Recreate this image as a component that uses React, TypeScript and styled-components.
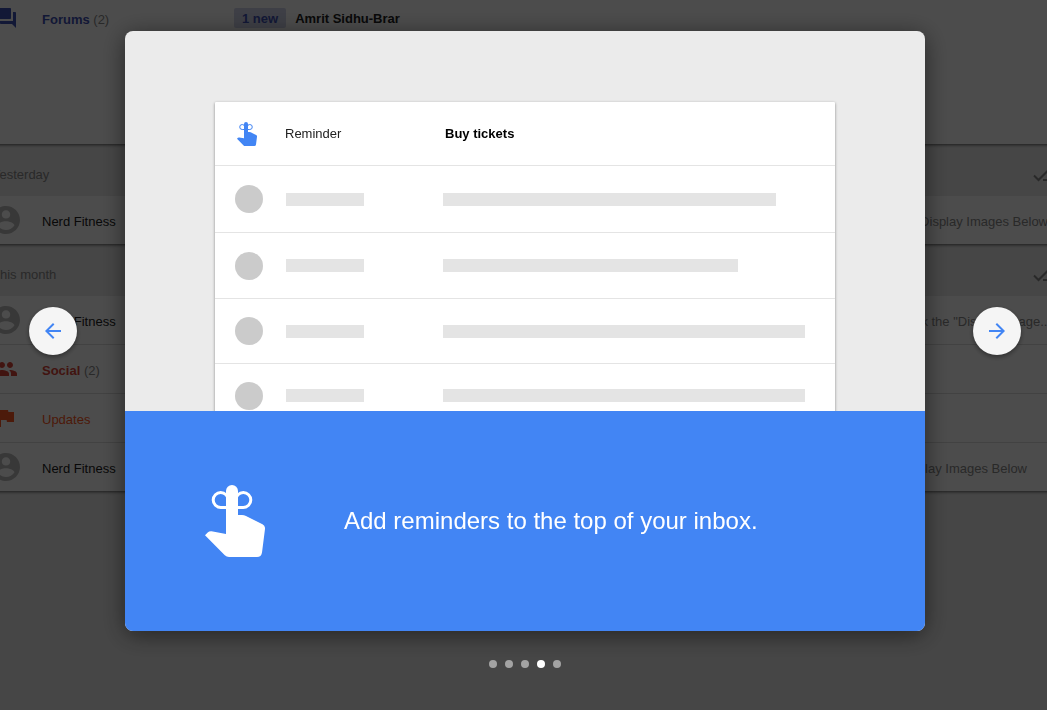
import React from "react";
import styled, { createGlobalStyle } from "styled-components";

const GlobalStyle = createGlobalStyle`
  * { box-sizing: border-box; }
  body {
    margin: 0;
    background: #ebebeb;
    font-family: "Liberation Sans", Arial, sans-serif;
    font-size: 13px;
    line-height: 16px;
    color: #212121;
    overflow: hidden;
  }
  h2, p, ul { margin: 0; padding: 0; }
`;

const Page = styled.div`
  min-height: 100vh;
  overflow: hidden;
`;

const Inbox = styled.main`
  margin: 0 -24px 0 -8px;
`;

const Card = styled.section<{ $tall?: boolean }>`
  background: #fff;
  min-height: ${(p) => (p.$tall ? 144 : 48)}px;
  box-shadow: 0 2px 3px -1px rgba(0, 0, 0, 0.6);
`;

const Row = styled.div<{ $first?: boolean }>`
  display: flex;
  align-items: center;
  height: ${(p) => (p.$first ? 36 : 48)}px;
  & + & {
    height: 49px;
    border-top: 1px solid #dcdcdc;
  }
`;

const IconSlot = styled.span<{ $color: string }>`
  display: flex;
  flex: none;
  justify-content: center;
  width: 28px;
  margin-right: 22px;
  color: ${(p) => p.$color};
`;

const Label = styled.span<{ $color?: string; $bold?: boolean }>`
  flex: none;
  width: 192px;
  padding-top: 3px;
  color: ${(p) => p.$color || "#212121"};
  font-weight: ${(p) => (p.$bold ? 700 : 400)};
`;

const Count = styled.span`
  color: #8a8a8a;
  font-weight: 400;
`;

const Badge = styled.span`
  padding: 3px 8px 1px;
  margin-right: 9px;
  border-radius: 2px;
  background: #d0d4ea;
  color: #3f51b5;
  font-weight: 700;
`;

const Sender = styled.span`
  padding-top: 2px;
  font-weight: 700;
`;

const Snippet = styled.span<{ $inset: number }>`
  flex: 1;
  padding: 3px ${(p) => p.$inset}px 0 0;
  text-align: right;
  white-space: nowrap;
  color: #8a8a8a;
`;

const GroupHeader = styled.header`
  display: flex;
  align-items: center;
  justify-content: space-between;
  height: 52px;
  padding: 10px 14px 0 0;
  color: #8a8a8a;
`;

const GroupTitle = styled.h2`
  font-size: 13px;
  font-weight: 400;
`;

const Scrim = styled.div`
  position: fixed;
  inset: 0;
  display: flex;
  flex-direction: column;
  align-items: center;
  padding: 31px 26px 0 29px;
  background: rgba(0, 0, 0, 0.7);
`;

const Carousel = styled.div`
  display: flex;
  align-items: center;
  gap: 48px;
  width: 100%;
  max-width: 992px;
`;

const ArrowButton = styled.button`
  display: flex;
  flex: none;
  align-items: center;
  justify-content: center;
  width: 48px;
  height: 48px;
  padding: 0;
  border: 0;
  border-radius: 50%;
  background: #f5f5f5;
  color: #4285f4;
  box-shadow: 0 2px 5px rgba(0, 0, 0, 0.4);
  cursor: pointer;
`;

const Dialog = styled.section`
  flex: 1;
  min-width: 0;
  border-radius: 8px;
  overflow: hidden;
  background: #ebebeb;
  box-shadow: 0 4px 24px rgba(0, 0, 0, 0.5);
`;

const Preview = styled.div`
  height: 380px;
  padding: 71px 90px 0;
  overflow: hidden;
`;

const PreviewList = styled.div`
  border-radius: 1px 1px 0 0;
  background: #fff;
  box-shadow: 0 1px 3px rgba(0, 0, 0, 0.45);
`;

const ReminderRow = styled.div`
  display: grid;
  grid-template-columns: 50px 160px 1fr;
  align-items: center;
  height: 64px;
  padding: 0 20px;
  border-bottom: 1px solid #e4e4e4;
  color: #212121;
  svg { margin-left: 2px; }
`;

const ReminderTitle = styled.strong`
  color: #000;
`;

const PlaceholderRow = styled.div<{ $height: number }>`
  display: grid;
  grid-template-columns: 51px 157px 1fr;
  align-items: center;
  height: ${(p) => p.$height}px;
  padding: 0 20px;
  border-bottom: 1px solid #e4e4e4;
`;

const Avatar = styled.span`
  width: 28px;
  height: 28px;
  border-radius: 50%;
  background: #cbcbcb;
`;

const Bar = styled.span<{ $width: number }>`
  width: ${(p) => p.$width}px;
  max-width: 100%;
  height: 13px;
  background: #e4e4e4;
`;

const Caption = styled.div`
  display: flex;
  align-items: center;
  gap: 79px;
  height: 220px;
  padding: 0 80px;
  background: #4285f4;
  color: #fff;
`;

const CaptionText = styled.p`
  font-size: 24px;
  line-height: 32px;
`;

const Dots = styled.div`
  display: flex;
  gap: 8px;
  margin-top: 29px;
`;

const Dot = styled.button<{ $active: boolean }>`
  width: 8px;
  height: 8px;
  padding: 0;
  border: 0;
  border-radius: 50%;
  background: ${(p) => (p.$active ? "#fff" : "rgba(255, 255, 255, 0.5)")};
  cursor: pointer;
`;

const Glyph = ({ d }: { d: string }) => (
  <svg width="24" height="24" viewBox="0 0 24 24" fill="currentColor" aria-hidden="true">
    <path d={d} />
  </svg>
);

const paths = {
  forum:
    "M21 6h-2v9H6v2c0 .55.45 1 1 1h11l4 4V7c0-.55-.45-1-1-1zm-4 6V3c0-.55-.45-1-1-1H3c-.55 0-1 .45-1 1v14l4-4h10c.55 0 1-.45 1-1z",
  people:
    "M16 11c1.66 0 2.99-1.34 2.99-3S17.66 5 16 5s-3 1.34-3 3 1.34 3 3 3zm-8 0c1.66 0 2.99-1.34 2.99-3S9.66 5 8 5 5 6.34 5 8s1.34 3 3 3zm0 2c-2.33 0-7 1.17-7 3.5V19h14v-2.5c0-2.33-4.67-3.5-7-3.5zm8 0c-.29 0-.62.02-.97.05 1.16.84 1.97 1.97 1.97 3.45V19h6v-2.5c0-2.33-4.67-3.5-7-3.5z",
  flag: "M14.4 6L14 4H5v17h2v-7h5.6l.4 2h7V6z",
  back: "M20 11H7.83l5.59-5.59L12 4l-8 8 8 8 1.41-1.41L7.83 13H20v-2z",
  forward: "M12 4l-1.41 1.41L16.17 11H4v2h12.17l-5.58 5.59L12 20l8-8z",
};

const PersonIcon = () => (
  <svg width="28" height="28" viewBox="2 2 20 20" fill="currentColor" aria-hidden="true">
    <path d="M12 2C6.48 2 2 6.48 2 12s4.48 10 10 10 10-4.48 10-10S17.52 2 12 2zm0 3c1.66 0 3 1.34 3 3s-1.34 3-3 3-3-1.34-3-3 1.34-3 3-3zm0 14.2c-2.5 0-4.71-1.28-6-3.22.03-1.99 4-3.08 6-3.08 1.99 0 5.97 1.09 6 3.08-1.29 1.94-3.5 3.22-6 3.22z" />
  </svg>
);

const SweepIcon = () => (
  <svg width="24" height="24" viewBox="0 0 24 24" fill="none" stroke="currentColor" strokeWidth="2" aria-hidden="true">
    <path d="M1 12.500l4.500 4.500L16 6.500M10 17h8M14 13h8" />
  </svg>
);

const ReminderIcon = ({ width, height, color }: { width: number; height: number; color: string }) => (
  <svg width={width} height={height} viewBox="0 0 60 72" aria-hidden="true">
    <path
      fill={color}
      d="M21 6a6 6 0 0 1 12 0v24h4q2 0 4 1l16.500 8.300q2.800 1.500 2.500 4.700l-3 23.500q-.7 4.500-5 4.500H24q-2.400 0-4.200-1.800L0 50.200l2.700-2.700Q4.200 46 6.500 46.200L21 49z"
    />
    <path
      fill="none"
      stroke={color}
      strokeWidth="3"
      d="M27 22.500H15.700a7.500 7.500 0 1 1 7.500-7.500M27 22.500h11.300a7.500 7.500 0 1 0-7.500-7.500"
    />
  </svg>
);

const placeholders = [
  { height: 67, width: 333 },
  { height: 66, width: 295 },
  { height: 65, width: 362 },
  { height: 64, width: 362 },
];

const NerdFitness = ({ snippet, inset }: { snippet: string; inset: number }) => (
  <Row>
    <IconSlot $color="#bdbdbd">
      <PersonIcon />
    </IconSlot>
    <Label>Nerd Fitness</Label>
    <Snippet $inset={inset}>{snippet}</Snippet>
  </Row>
);

const Group = ({ title }: { title: string }) => (
  <GroupHeader>
    <GroupTitle>{title}</GroupTitle>
    <SweepIcon />
  </GroupHeader>
);

export default function App() {
  const [slide, setSlide] = React.useState(3);
  return (
    <>
      <GlobalStyle />
      <Page>
        <Inbox>
          <Card $tall>
            <Row $first>
              <IconSlot $color="#3f51b5">
                <Glyph d={paths.forum} />
              </IconSlot>
              <Label $bold $color="#3f51b5">
                Forums <Count>(2)</Count>
              </Label>
              <Badge>1 new</Badge>
              <Sender>Amrit Sidhu-Brar</Sender>
            </Row>
          </Card>
          <Group title="Yesterday" />
          <Card>
            <NerdFitness snippet="Display Images Below" inset={23} />
          </Card>
          <Group title="This month" />
          <Card>
            <NerdFitness snippet={'Click the "Display Image...'} inset={20} />
            <Row>
              <IconSlot $color="#db4437">
                <Glyph d={paths.people} />
              </IconSlot>
              <Label $bold $color="#db4437">
                Social <Count>(2)</Count>
              </Label>
            </Row>
            <Row>
              <IconSlot $color="#ff5722">
                <Glyph d={paths.flag} />
              </IconSlot>
              <Label $color="#ff5722">Updates</Label>
            </Row>
            <NerdFitness snippet="Display Images Below" inset={44} />
          </Card>
        </Inbox>
      </Page>
      <Scrim>
        <Carousel>
          <ArrowButton aria-label="Previous" onClick={() => setSlide((slide + 4) % 5)}>
            <Glyph d={paths.back} />
          </ArrowButton>
          <Dialog role="dialog" aria-label="Reminders">
            <Preview>
              <PreviewList>
                <ReminderRow>
                  <ReminderIcon width={20} height={24} color="#4285f4" />
                  <span>Reminder</span>
                  <ReminderTitle>Buy tickets</ReminderTitle>
                </ReminderRow>
                {placeholders.map((row, i) => (
                  <PlaceholderRow key={i} $height={row.height}>
                    <Avatar />
                    <Bar $width={78} />
                    <Bar $width={row.width} />
                  </PlaceholderRow>
                ))}
              </PreviewList>
            </Preview>
            <Caption>
              <ReminderIcon width={60} height={72} color="#fff" />
              <CaptionText>Add reminders to the top of your inbox.</CaptionText>
            </Caption>
          </Dialog>
          <ArrowButton aria-label="Next" onClick={() => setSlide((slide + 1) % 5)}>
            <Glyph d={paths.forward} />
          </ArrowButton>
        </Carousel>
        <Dots>
          {[0, 1, 2, 3, 4].map((i) => (
            <Dot key={i} $active={i === slide} aria-label={`Slide ${i + 1}`} onClick={() => setSlide(i)} />
          ))}
        </Dots>
      </Scrim>
    </>
  );
}
